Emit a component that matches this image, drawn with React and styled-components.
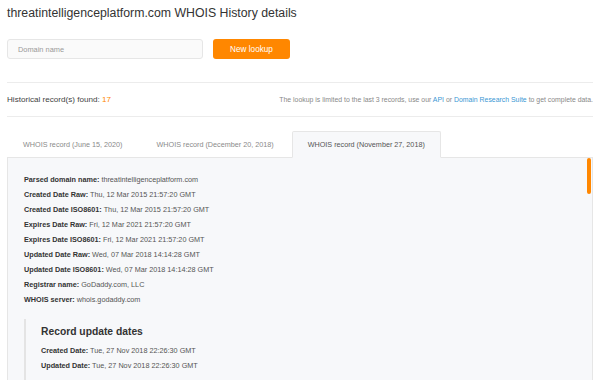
import React from 'react';
import styled, { createGlobalStyle } from 'styled-components';

const GlobalStyle = createGlobalStyle`
  html, body {
    margin: 0;
    padding: 0;
    overflow: hidden;
    background: #fff;
  }
  body {
    font-family: "Liberation Sans", Arial, sans-serif;
    color: #333;
  }
  * { box-sizing: border-box; }
`;

const parsed = [
  ['Parsed domain name', 'threatintelligenceplatform.com'],
  ['Created Date Raw', 'Thu, 12 Mar 2015 21:57:20 GMT'],
  ['Created Date ISO8601', 'Thu, 12 Mar 2015 21:57:20 GMT'],
  ['Expires Date Raw', 'Fri, 12 Mar 2021 21:57:20 GMT'],
  ['Expires Date ISO8601', 'Fri, 12 Mar 2021 21:57:20 GMT'],
  ['Updated Date Raw', 'Wed, 07 Mar 2018 14:14:28 GMT'],
  ['Updated Date ISO8601', 'Wed, 07 Mar 2018 14:14:28 GMT'],
  ['Registrar name', 'GoDaddy.com, LLC'],
  ['WHOIS server', 'whois.godaddy.com'],
];

const updates = [
  ['Created Date', 'Tue, 27 Nov 2018 22:26:30 GMT'],
  ['Updated Date', 'Tue, 27 Nov 2018 22:26:30 GMT'],
];

const tabs = [
  'WHOIS record (June 15, 2020)',
  'WHOIS record (December 20, 2018)',
  'WHOIS record (November 27, 2018)',
];

const Page = styled.div`
  padding: 5px 7px 0;
`;

const Title = styled.h1`
  margin: 0;
  font-size: 12.3px;
  line-height: 16px;
  font-weight: normal;
  color: #333;
`;

const SearchRow = styled.form`
  display: flex;
  gap: 10px;
  margin-top: 18px;
  padding-bottom: 23px;
  border-bottom: 1px solid #ececec;
`;

const Input = styled.input`
  width: 196px;
  height: 20px;
  padding: 0 10px;
  border: 1px solid #e6e6e6;
  border-radius: 3px;
  background: #fafafa;
  font-family: inherit;
  font-size: 7.4px;
  color: #555;
  outline: none;
  &::placeholder { color: #999; }
`;

const LookupButton = styled.button`
  width: 77px;
  height: 20px;
  border: none;
  border-radius: 3px;
  background: #ff8700;
  color: #fff;
  font-family: inherit;
  font-size: 8.2px;
  cursor: pointer;
`;

const InfoRow = styled.div`
  display: flex;
  align-items: center;
  justify-content: space-between;
  height: 34px;
  border-bottom: 1px solid #ececec;
`;

const Found = styled.div`
  font-size: 8.1px;
  color: #3f3f3f;
  span { color: #ff8700; }
`;

const Note = styled.div`
  font-size: 6.9px;
  color: #888;
  a {
    color: #3a97d4;
    text-decoration: none;
  }
`;

const TabBar = styled.div`
  display: flex;
  margin-top: 14px;
  margin-bottom: -1px;
`;

const Tab = styled.div`
  position: relative;
  z-index: 1;
  height: 27px;
  display: flex;
  align-items: center;
  padding: 0 15px;
  margin-right: 2px;
  font-size: 7.22px;
  color: ${p => (p.$active ? '#555' : '#8a8a8a')};
  background: ${p => (p.$active ? '#f7f8fa' : 'transparent')};
  border: 1px solid ${p => (p.$active ? '#e6e6e6' : 'transparent')};
  border-bottom-color: ${p => (p.$active ? '#f7f8fa' : 'transparent')};
  border-radius: 2px 2px 0 0;
`;

const Panel = styled.div`
  position: relative;
  height: 240px;
  overflow: hidden;
  background: #f7f8fa;
  border: 1px solid #e6e6e6;
  padding: 14px 16px 0;
`;

const ScrollThumb = styled.div`
  position: absolute;
  top: 0;
  right: 1px;
  width: 4px;
  height: 36px;
  border-radius: 2px;
  background: #ff8700;
`;

const Field = styled.div`
  font-size: 7.25px;
  line-height: 15px;
  color: #555;
  b {
    color: #333;
    font-weight: bold;
  }
`;

const Section = styled.div`
  margin-top: 12px;
  padding: 6px 0 14px 15px;
  border-left: 2px solid #e4e4e4;
`;

const SectionTitle = styled.h3`
  margin: 0 0 4px;
  font-size: 10.3px;
  line-height: 14px;
  font-weight: bold;
  color: #333;
`;

const Row = ({ label, value }) => (
  <Field><b>{label}:</b> {value}</Field>
);

export default function App() {
  return (
    <Page>
      <GlobalStyle />
      <Title>threatintelligenceplatform.com WHOIS History details</Title>
      <SearchRow onSubmit={e => e.preventDefault()}>
        <Input placeholder="Domain name" />
        <LookupButton type="submit">New lookup</LookupButton>
      </SearchRow>
      <InfoRow>
        <Found>Historical record(s) found: <span>17</span></Found>
        <Note>
          The lookup is limited to the last 3 records, use our <a href="#">API</a> or{' '}
          <a href="#">Domain Research Suite</a> to get complete data.
        </Note>
      </InfoRow>
      <TabBar>
        {tabs.map((t, i) => (
          <Tab key={t} $active={i === 2}>{t}</Tab>
        ))}
      </TabBar>
      <Panel>
        <ScrollThumb />
        {parsed.map(([l, v]) => <Row key={l} label={l} value={v} />)}
        <Section>
          <SectionTitle>Record update dates</SectionTitle>
          {updates.map(([l, v]) => <Row key={l} label={l} value={v} />)}
        </Section>
      </Panel>
    </Page>
  );
}
